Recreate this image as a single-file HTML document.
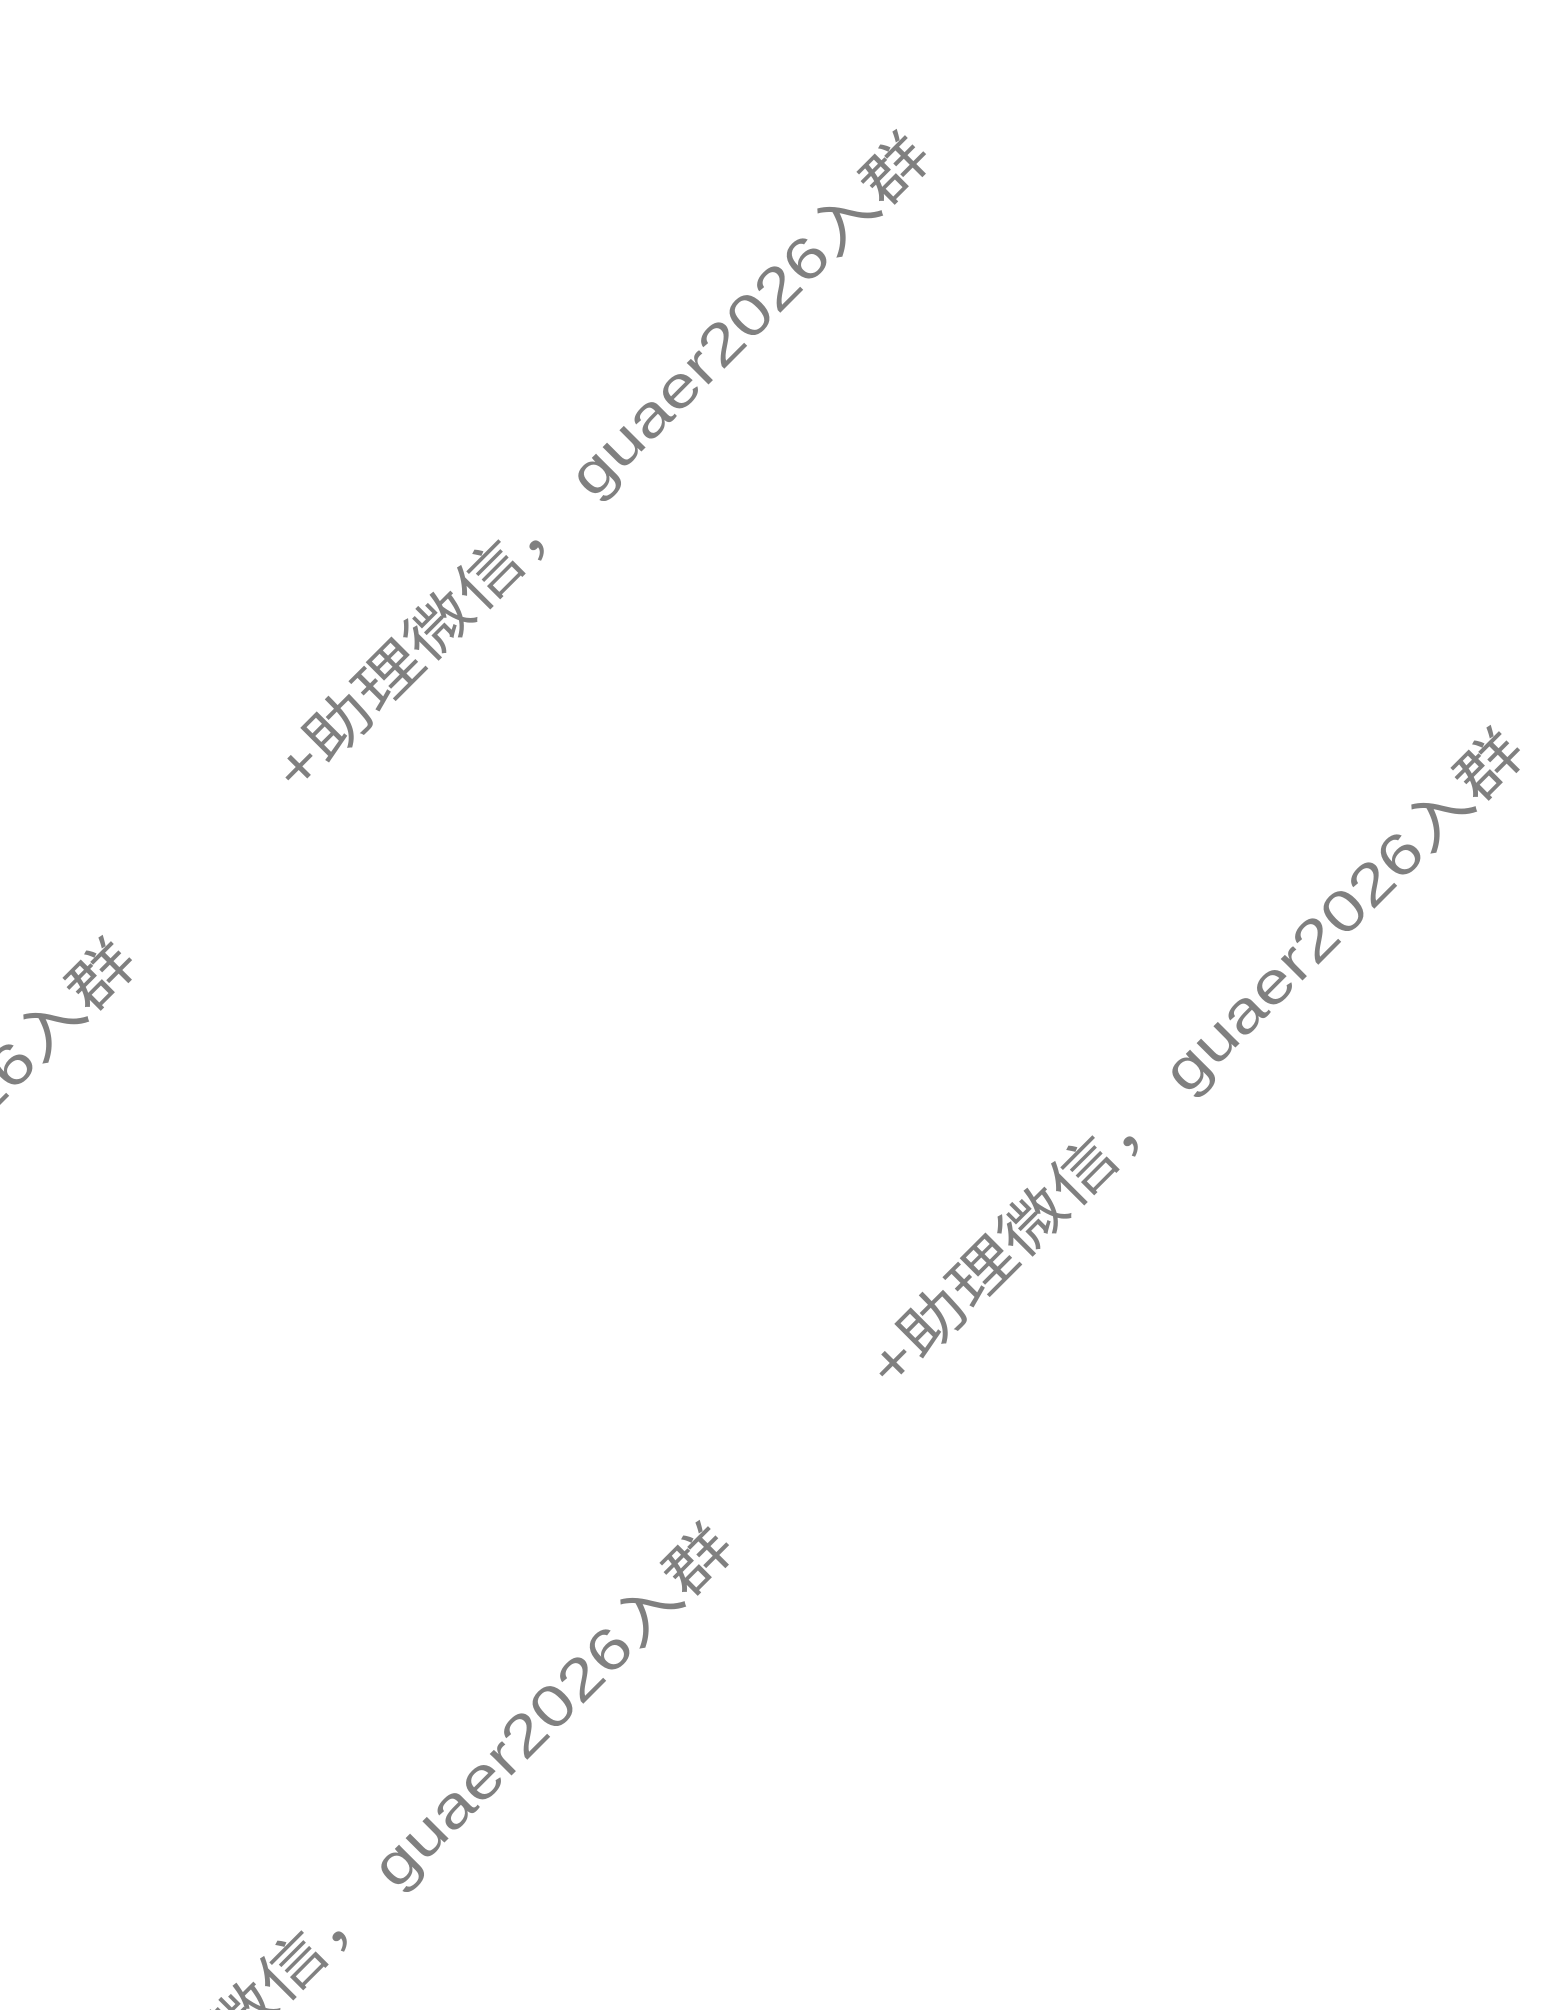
<!DOCTYPE html>
<html><head><meta charset="utf-8"><style>
html,body{margin:0;padding:0;background:#fff;width:1542px;height:2010px;overflow:hidden}
svg{position:absolute;left:0;top:0;display:block}
text{font-family:"Liberation Sans","Noto Sans CJK SC",sans-serif;font-size:58px;fill:#808080}
</style></head><body>
<svg width="1542" height="2010" viewBox="0 0 1542 2010" overflow="hidden">
<text transform="translate(298,795) rotate(-45)" textLength="900" lengthAdjust="spacingAndGlyphs">+助理微信， guaer2026入群</text>
<text transform="translate(892,1391) rotate(-45)" textLength="900" lengthAdjust="spacingAndGlyphs">+助理微信， guaer2026入群</text>
<text transform="translate(-496,1601) rotate(-45)" textLength="900" lengthAdjust="spacingAndGlyphs">+助理微信， guaer2026入群</text>
<text transform="translate(101,2186) rotate(-45)" textLength="900" lengthAdjust="spacingAndGlyphs">+助理微信， guaer2026入群</text>
</svg>
</body></html>
